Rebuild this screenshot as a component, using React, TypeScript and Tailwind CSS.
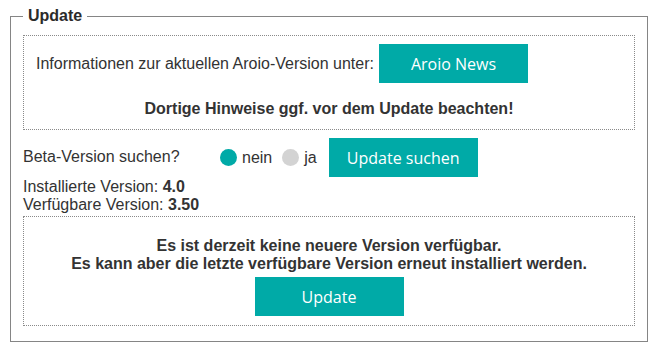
import React from "react";

const btn =
  "h-[39px] w-[149px] bg-[#00aaa7] text-white text-[16px] font-['Open_Sans',sans-serif] flex items-center justify-center";

export default function App() {
  const [beta, setBeta] = React.useState(false);

  return (
    <div className="h-[352px] w-[659px] bg-white pl-[10px] pt-[6px] font-['Liberation_Sans',Arial,sans-serif] text-[16px] leading-[18px] text-[#333]">
      <fieldset className="w-[638px] border border-[#858585] px-[12px] pb-[15px]">
        <legend className="ml-0 px-[5px] text-[16px] font-bold leading-[20px] text-[#2b2b2b]">Update</legend>

        <div className="mt-[9px] flex h-[95px] flex-col items-center border border-dotted border-[#8a8a8a] pt-[8px]">
          <div className="flex items-center gap-[5px] self-start pl-[12px]">
            <span>Informationen zur aktuellen Aroio-Version unter:</span>
            <button className={btn}>Aroio News</button>
          </div>
          <p className="mt-[17px] font-bold">Dortige Hinweise ggf. vor dem Update beachten!</p>
        </div>

        <div className="mt-[8px] flex items-center">
          <span className="w-[197px] pb-[2px]">Beta-Version suchen?</span>
          <label className="flex items-center gap-[5px]" onClick={() => setBeta(false)}>
            <span className={`h-[17px] w-[17px] rounded-full ${beta ? "bg-[#d3d3d3]" : "bg-[#00aaa7]"}`} />
            <span>nein</span>
          </label>
          <label className="ml-[10px] flex items-center gap-[5px]" onClick={() => setBeta(true)}>
            <span className={`h-[17px] w-[17px] rounded-full ${beta ? "bg-[#00aaa7]" : "bg-[#d3d3d3]"}`} />
            <span>ja</span>
          </label>
          <button className={`${btn} ml-[12px]`}>Update suchen</button>
        </div>

        <div className="mt-[1px]">
          <p>
            Installierte Version: <b>4.0</b>
          </p>
          <p>
            Verfügbare Version: <b>3.50</b>
          </p>
        </div>

        <div className="mt-[2px] flex h-[110px] flex-col items-center border border-dotted border-[#8a8a8a] pt-[20px] text-center font-bold">
          <p>Es ist derzeit keine neuere Version verfügbar.</p>
          <p>Es kann aber die letzte verfügbare Version erneut installiert werden.</p>
          <button className={`${btn} mt-[4px] font-normal`}>Update</button>
        </div>
      </fieldset>
    </div>
  );
}
